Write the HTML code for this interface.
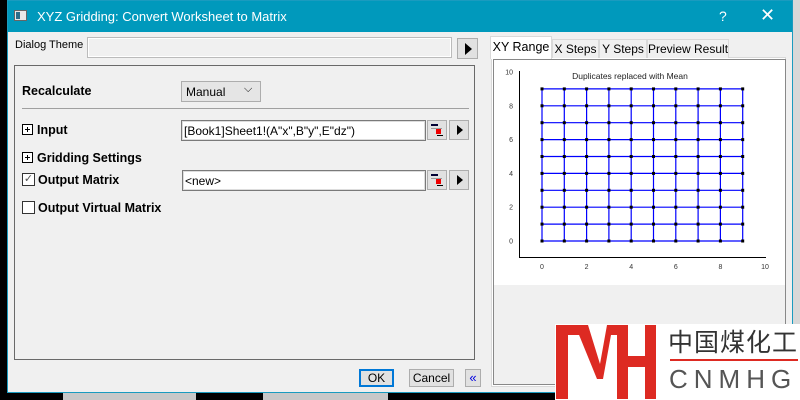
<!DOCTYPE html>
<html><head><meta charset="utf-8"><style>
*{margin:0;padding:0;box-sizing:border-box}
body{width:800px;height:400px;overflow:hidden;background:#000;position:relative;font-family:"Liberation Sans",Arial,sans-serif;font-size:12px;color:#000}
.a{position:absolute}
.dlg{left:7px;top:0;width:786px;height:393px;background:#f0f0f0;border:1px solid #1a9bbf}
.title{left:0;top:0;width:784px;height:31px;background:#0099bc;color:#fff;font-size:13px}
.b{font-weight:bold;font-size:12.5px}
.btn{background:#e1e1e1;border:1px solid #adadad}
.field{background:#fff;border:1px solid #7a7a7a;box-shadow:inset 0 0 0 1px #ddd;font-size:12px;padding:3px 2px}
.tri{width:0;height:0;border-top:5px solid transparent;border-bottom:5px solid transparent;border-left:6px solid #000}
.pl{width:11px;height:11px;border:1px solid #000;background:#fff}
.pl:before{content:"";position:absolute;left:2px;top:4px;width:5px;height:1px;background:#000}
.pl:after{content:"";position:absolute;left:4px;top:2px;width:1px;height:5px;background:#000}
.tab{top:38px;height:19px;background:#f0f0f0;border:1px solid #d9d9d9;border-bottom:none;font-size:12px;padding:2px 0;text-align:center;white-space:nowrap}
</style></head><body>
<div class="a" style="left:0;top:392px;width:800px;height:8px;background:#000"></div>
<div class="a" style="left:63px;top:393px;width:133px;height:7px;background:#c8c8c8"></div>
<div class="a" style="left:263px;top:393px;width:125px;height:7px;background:#c8c8c8"></div>
<div class="a" style="left:793px;top:0;width:7px;height:400px;background:#d8d8d8"></div>

<div class="a dlg">
 <div class="a title">
  <div class="a" style="left:6px;top:9px;width:13px;height:11px;background:#e8e8e8;border:1px solid #666"><div class="a" style="left:1px;top:1px;width:4px;height:7px;background:#2d6d8a"></div></div>
  <div class="a" style="left:29px;top:8px">XYZ Gridding: Convert Worksheet to Matrix</div>
  <div class="a" style="left:711px;top:7px;font-size:14px">?</div>
  <div class="a" style="left:752px;top:4px;font-size:18px">✕</div>
 </div>
 <div class="a" style="left:7px;top:38px;font-size:11px">Dialog Theme</div>
 <div class="a" style="left:79px;top:36px;width:365px;height:21px;background:#f0f0f0;border:1px solid #bbb;box-shadow:inset 0 0 0 1px #fff"></div>
 <div class="a btn" style="left:449px;top:37px;width:21px;height:21px"><div class="a tri" style="left:7px;top:4px;border-top-width:6px;border-bottom-width:6px;border-left-width:7px"></div></div>

 <div class="a" style="left:6px;top:64px;width:461px;height:295px;border:1px solid #696969"></div>
 <div class="a b" style="left:14px;top:83px">Recalculate</div>
 <div class="a" style="left:173px;top:80px;width:80px;height:21px;background:#e5e5e5;border:1px solid #adadad;padding:3px 4px">Manual<span class="a" style="left:62px;top:1px;font-size:11px">⌵</span></div>
 <div class="a" style="left:14px;top:107px;width:447px;height:1px;background:#a0a0a0"></div>

 <div class="a pl" style="left:14px;top:123px"></div>
 <div class="a b" style="left:29px;top:122px">Input</div>
 <div class="a field" style="left:173px;top:119px;width:245px;height:21px">[Book1]Sheet1!(A"x",B"y",E"dz")</div>
 <div class="a pl" style="left:14px;top:151px"></div>
 <div class="a b" style="left:29px;top:150px">Gridding Settings</div>
 <div class="a" style="left:14px;top:172px;width:13px;height:13px;border:1px solid #333;background:#fff;font-size:11px;line-height:11px;text-align:center;color:#555">✓</div>
 <div class="a b" style="left:30px;top:172px">Output Matrix</div>
 <div class="a field" style="left:174px;top:169px;width:244px;height:21px">&lt;new&gt;</div>
 <div class="a" style="left:14px;top:200px;width:13px;height:13px;border:1px solid #333;background:#fff"></div>
 <div class="a b" style="left:30px;top:200px">Output Virtual Matrix</div>

 <div class="a btn" style="left:419px;top:119px;width:20px;height:20px"><div class="a" style="left:3px;top:3px;width:7px;height:2px;background:#003"></div><div class="a" style="left:3px;top:7px;width:11px;height:1px;background:#999"></div><div class="a" style="left:8px;top:8px;width:5px;height:5px;background:#e00"></div><div class="a" style="left:9px;top:14px;width:6px;height:1px;background:#000"></div></div>
 <div class="a btn" style="left:441px;top:119px;width:20px;height:20px"><div class="a tri" style="left:7px;top:4px"></div></div>
 <div class="a btn" style="left:419px;top:169px;width:20px;height:20px"><div class="a" style="left:3px;top:3px;width:7px;height:2px;background:#003"></div><div class="a" style="left:3px;top:7px;width:11px;height:1px;background:#999"></div><div class="a" style="left:8px;top:8px;width:5px;height:5px;background:#e00"></div><div class="a" style="left:9px;top:14px;width:6px;height:1px;background:#000"></div></div>
 <div class="a btn" style="left:441px;top:169px;width:20px;height:20px"><div class="a tri" style="left:7px;top:4px"></div></div>

 <div class="a btn" style="left:351px;top:368px;width:35px;height:18px;border:2px solid #0078d7;text-align:center;line-height:14px">OK</div>
 <div class="a btn" style="left:401px;top:368px;width:45px;height:18px;text-align:center;line-height:16px">Cancel</div>
 <div class="a btn" style="left:457px;top:368px;width:16px;height:18px;color:#0000e0;font-size:13px;line-height:15px;text-align:center">«</div>

 <div class="a" style="left:483px;top:56px;width:295px;height:330px;background:#fff;border:1px solid #d9d9d9"></div>
 <div class="a tab" style="left:482px;top:35px;height:23px;width:62px;background:#fff;padding-top:3px;font-size:12.5px">XY Range</div>
 <div class="a tab" style="left:544px;width:47px">X Steps</div>
 <div class="a tab" style="left:591px;width:48px">Y Steps</div>
 <div class="a tab" style="left:639px;width:82px">Preview Result</div>
 <div class="a" style="left:485px;top:58px;width:293px;height:326px;border:1px solid #888;background:#f0f0f0"></div>
 <svg class="a" style="left:486px;top:59px" width="291" height="225" viewBox="494 59 291 225">
  <rect x="494" y="59" width="291" height="225" fill="#fff"/>
  <text x="630" y="78" font-size="8.5" text-anchor="middle" fill="#222" font-family="Liberation Sans">Duplicates replaced with Mean</text>
  <g stroke="#000" stroke-width="1">
   <line x1="519.5" y1="70" x2="519.5" y2="257"/><line x1="519" y1="256.5" x2="766" y2="256.5"/>
  </g>
  <g id="g" stroke="#0000ff" stroke-width="1.2" fill="none"></g>
  <g id="t"></g>
 </svg>
</div>

<div class="a" style="left:555px;top:324px;width:245px;height:76px;background:#fff"></div>
<svg class="a" style="left:555px;top:324px" width="110" height="76">
 <g fill="#dd2a22">
  <rect x="1" y="1" width="12" height="74"/>
  <rect x="1" y="1" width="32" height="10"/>
  <polygon points="20,1 33,1 45,40 52,1 65,1 65,11 56,11 48,55 42,55"/>
  <rect x="62" y="1" width="11" height="74"/>
  <rect x="62" y="32" width="38" height="11"/>
  <rect x="90" y="1" width="11" height="74"/>
 </g>
</svg>
<div class="a" style="left:668px;top:326px;font-family:'Noto Sans CJK SC',sans-serif;font-size:25px;color:#333;letter-spacing:1px;line-height:30px">中国煤化工</div>
<div class="a" style="left:670px;top:359px;width:128px;height:2px;background:#dd2a22"></div>
<div class="a" style="left:669px;top:363px;font-size:26px;color:#555;letter-spacing:6px;line-height:32px;white-space:nowrap">CNMHG</div>

<script>
var g=document.getElementById('g'),t=document.getElementById('t'),s='';
function X(v){return 542+v*22.3}function Y(v){return 240-v*16.9}
for(var i=0;i<10;i++){s+='<line x1="'+X(i)+'" y1="'+Y(0)+'" x2="'+X(i)+'" y2="'+Y(9)+'"/>';s+='<line x1="'+X(0)+'" y1="'+Y(i)+'" x2="'+X(9)+'" y2="'+Y(i)+'"/>';}
g.innerHTML=s;s='';
for(var i=0;i<10;i++)for(var j=0;j<10;j++)s+='<rect x="'+(X(i)-1.5)+'" y="'+(Y(j)-1.5)+'" width="3" height="3" fill="#000"/>';
for(var v=0;v<=10;v+=2){s+='<text x="'+X(v)+'" y="268" font-size="7" text-anchor="middle" fill="#333">'+v+'</text>';s+='<text x="513" y="'+(Y(v)+2.5)+'" font-size="7" text-anchor="end" fill="#333">'+v+'</text>';}
t.innerHTML=s;
</script>
</body></html>
